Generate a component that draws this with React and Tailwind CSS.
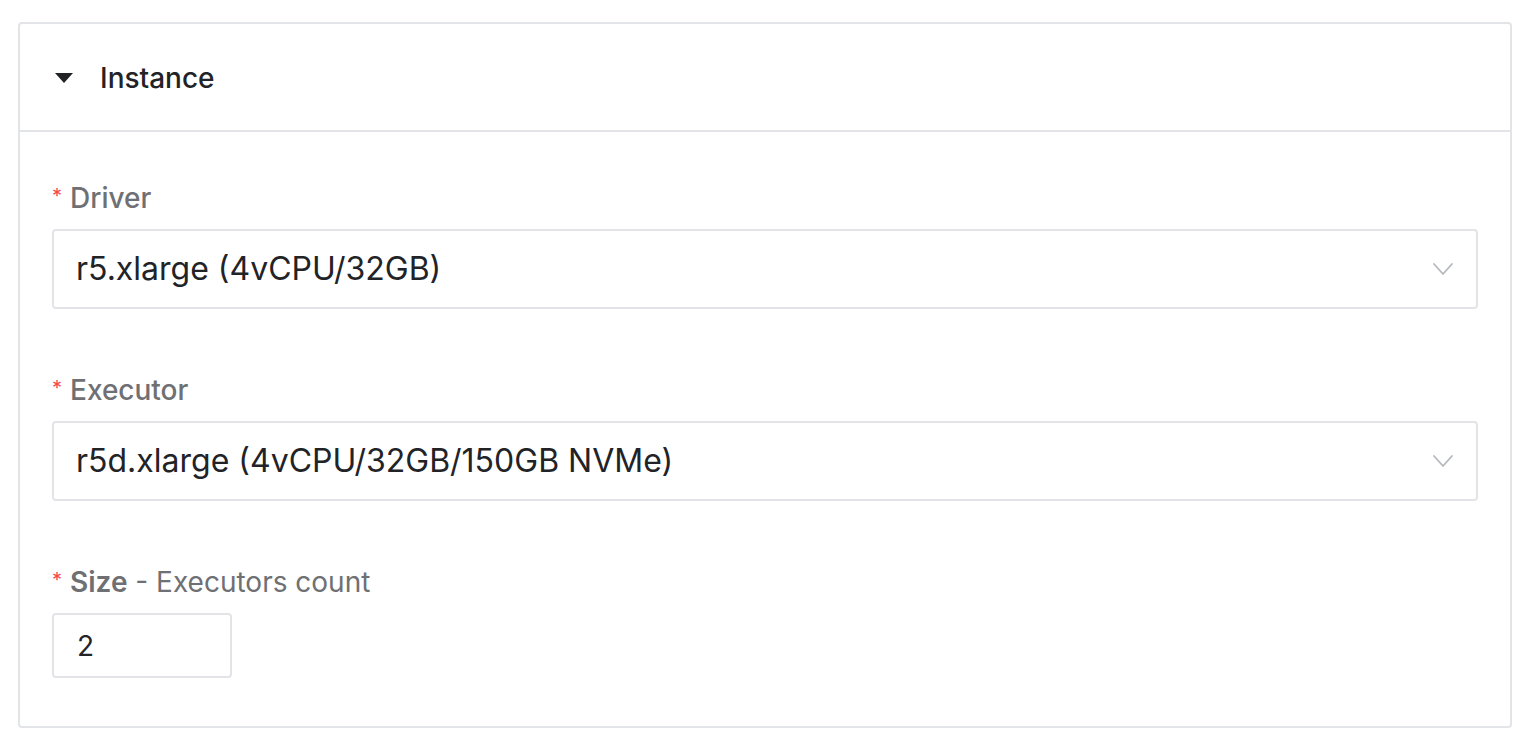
export default function App() {
  const Chevron = () => (
    <svg width="22" height="14" viewBox="0 0 22 14" fill="none" className="shrink-0">
      <path d="M2 2 L11 12 L20 2" stroke="#b5b8bd" strokeWidth="1.8" strokeLinecap="round" strokeLinejoin="round" />
    </svg>
  );
  const Label = ({ children }) => (
    <div className="flex items-center h-[36px] text-[28px] leading-[36px] text-[#6f7073]">
      <span className="text-[#f5484a] text-[20px] mr-[8px] self-start leading-[32px]">*</span>
      {children}
    </div>
  );
  const Select = ({ value }) => (
    <div className="mt-[13px] h-[80px] border-2 border-[#e2e4e8] rounded-[4px] flex items-center justify-between pl-[22px] pr-[22px]">
      <span className="text-[32px] text-[#222327]">{value}</span>
      <Chevron />
    </div>
  );
  return (
    <div className="w-[1534px] h-[744px] bg-white pt-[22px] pl-[18px]" style={{ fontFamily: 'Inter, "Noto Sans", sans-serif' }}>
      <div className="w-[1494px] h-[706px] border-2 border-[#e2e4e8] rounded-[4px] flex flex-col">
        <div className="h-[108px] flex items-center pl-[35px] border-b-2 border-[#e2e4e8]">
          <svg width="18" height="10" viewBox="0 0 18 10" className="mt-[2px]">
            <path d="M0 0 L18 0 L9 10 Z" fill="#222327" />
          </svg>
          <span className="ml-[27px] text-[28px] font-medium text-[#222327] mt-[2px]">Instance</span>
        </div>
        <div className="pl-[32px] pr-[32px] pt-[48px]">
          <Label><span className="font-medium">Driver</span></Label>
          <Select value="r5.xlarge (4vCPU/32GB)" />
          <div className="mt-[63px]">
            <Label><span className="font-medium">Executor</span></Label>
            <Select value="r5d.xlarge (4vCPU/32GB/150GB NVMe)" />
          </div>
          <div className="mt-[63px]">
            <Label>
              <span className="font-semibold">Size</span>
              <span>&nbsp;- Executors count</span>
            </Label>
            <div className="mt-[13px] w-[180px] h-[65px] border-2 border-[#e2e4e8] rounded-[4px] flex items-center pl-[23px] text-[28px] text-[#222327]">
              2
            </div>
          </div>
        </div>
      </div>
    </div>
  );
}
